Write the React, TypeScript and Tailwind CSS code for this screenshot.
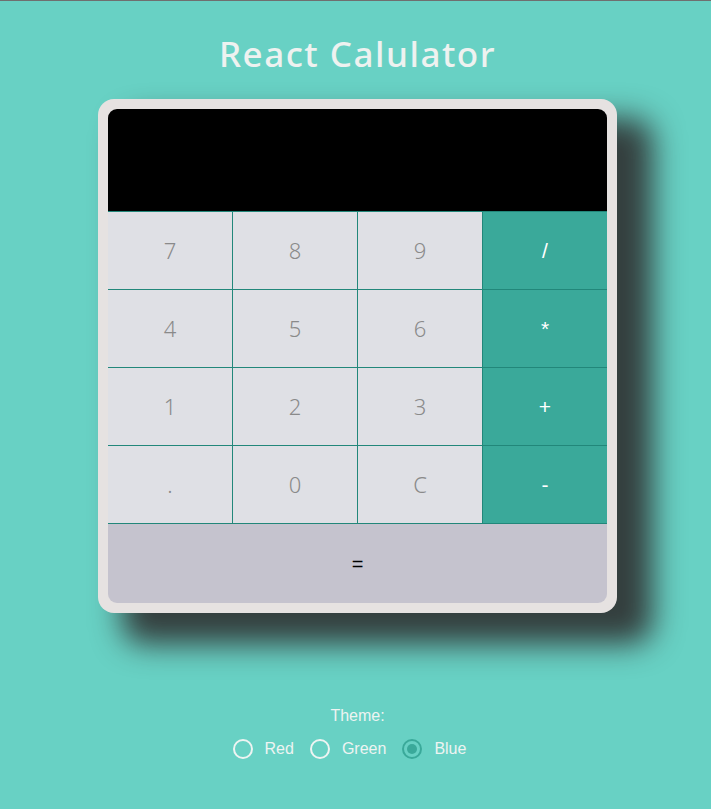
import { useState } from "react";

const keys = [
  { label: "7", op: false },
  { label: "8", op: false },
  { label: "9", op: false },
  { label: "/", op: true },
  { label: "4", op: false },
  { label: "5", op: false },
  { label: "6", op: false },
  { label: "*", op: true },
  { label: "1", op: false },
  { label: "2", op: false },
  { label: "3", op: false },
  { label: "+", op: true },
  { label: ".", op: false },
  { label: "0", op: false },
  { label: "C", op: false },
  { label: "-", op: true },
];

export default function App() {
  const [display, setDisplay] = useState("");
  const [theme, setTheme] = useState("Blue");

  function press(k: string) {
    if (k === "C") return setDisplay("");
    setDisplay((d) => d + k);
  }

  return (
    <div className="min-h-[809px] pl-[4px] bg-[#68d1c4] border-t border-[#6f6f6f] flex flex-col items-center font-['Liberation_Sans',Arial,sans-serif]">
      {/* Title */}
      <h1 className="mt-[31px] text-[35px] leading-[44px] font-medium text-[#eef2f0] tracking-[1.5px] font-['Noto_Sans',sans-serif]">
        React Calulator
      </h1>

      {/* Calculator */}
      <div className="mt-[23px] w-[519px] p-[10px] rounded-[16px] bg-[#e6e2e1] shadow-[30px_25px_30px_6px_rgba(50,55,55,0.95)]">
        <div className="rounded-[9px] overflow-hidden">
          <div className="h-[102px] bg-black text-white text-right text-4xl px-4 flex items-end pb-3 justify-end">
            {display}
          </div>
          <div className="grid grid-cols-4 gap-px bg-[#22877a] border-t border-[#22877a]">
            {keys.map((k) => (
              <button
                key={k.label}
                onClick={() => press(k.label)}
                className={
                  k.op
                    ? "h-[77px] bg-[#3aa99a] text-white text-[21px] font-['Liberation_Sans',Arial,sans-serif]"
                    : "h-[77px] bg-[#dfe0e5] text-[#8a8a8a] text-[22px] font-light font-['Noto_Sans',sans-serif]"
                }
              >
                {k.label}
              </button>
            ))}
          </div>
          <button
            onClick={() => setDisplay("")}
            className="w-full h-[80px] border-t border-[#22877a] bg-[#c5c3ce] text-black text-[20px]"
          >
            =
          </button>
        </div>
      </div>

      {/* Theme */}
      <div className="mt-[91px] text-[#eef4f2] text-[16px]">Theme:</div>
      <div className="mt-[9px] mr-[16px] flex items-center gap-[16px] text-[#eef4f2] text-[16px]">
        {["Red", "Green", "Blue"].map((t) => (
          <label key={t} className="flex items-center gap-[12px] cursor-pointer" onClick={() => setTheme(t)}>
            {theme === t ? (
              <span className="w-[20px] h-[20px] rounded-full border-2 border-[#3aa99a] flex items-center justify-center">
                <span className="w-[10px] h-[10px] rounded-full bg-[#3aa99a]" />
              </span>
            ) : (
              <span className="w-[20px] h-[20px] rounded-full border-2 border-[#eef4f2]" />
            )}
            {t}
          </label>
        ))}
      </div>
    </div>
  );
}
